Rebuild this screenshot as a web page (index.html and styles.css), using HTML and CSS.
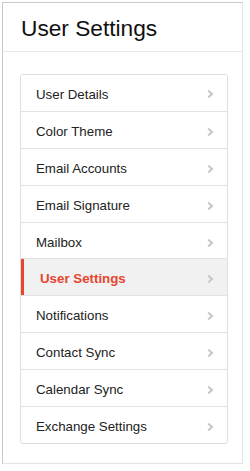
FILE: index.html
```html
<!DOCTYPE html>
<html lang="en">
<head>
  <meta charset="UTF-8" />
  <title>User Settings</title>
  <meta name="viewport" content="width=device-width, initial-scale=1" />
  <link rel="stylesheet" href="styles.css">
</head>
<body>
  <div class="panel">
    <h1 class="panel-title">User Settings</h1>
    <div class="panel-body">
      <ul class="menu">
        <li class="menu-item">User Details</li>
        <li class="menu-item">Color Theme</li>
        <li class="menu-item">Email Accounts</li>
        <li class="menu-item">Email Signature</li>
        <li class="menu-item">Mailbox</li>
        <li class="menu-item active">User Settings</li>
        <li class="menu-item">Notifications</li>
        <li class="menu-item">Contact Sync</li>
        <li class="menu-item">Calendar Sync</li>
        <li class="menu-item">Exchange Settings</li>
      </ul>
    </div>
  </div>
</body>
</html>
```

FILE: styles.css
```css
body {
  margin: 0;
  background: #fff;
  font-family: "Liberation Sans", Arial, sans-serif;
  color: #222;
}
.panel {
  margin: 2px 0 0 2px;
  width: 241px;
  height: 462px;
  border: 1px solid #c8c8c8;
  border-right-color: #e4e4e4;
  border-bottom-color: #e4e4e4;
  box-sizing: border-box;
}
.panel-title {
  margin: 0;
  height: 49px;
  padding: 12px 0 0 18px;
  box-sizing: border-box;
  font-size: 22.7px;
  font-weight: normal;
  color: #111;
  border-bottom: 1px solid #e8e8e8;
}
.panel-body {
  padding: 22px 14px 0 17px;
}
.menu {
  list-style: none;
  margin: 0;
  padding: 0;
  border: 1px solid #dedede;
  border-radius: 3px;
}
.menu-item {
  position: relative;
  height: 36.9px;
  line-height: 34px;
  padding: 3px 0 0 15px;
  box-sizing: border-box;
  font-size: 13.3px;
  border-top: 1px solid #e2e2e2;
}
.menu-item:first-child {
  border-top: none;
  height: 35.9px;
}
.menu-item::after {
  content: "";
  position: absolute;
  right: 15px;
  top: 17px;
  width: 4px;
  height: 4px;
  border-top: 2.5px solid #c8c8c8;
  border-right: 2.5px solid #c8c8c8;
  transform: rotate(45deg);
}
.menu-item:first-child::after {
  top: 16px;
}
.menu-item.active {
  background: #f1f1f1;
  color: #e6452f;
  font-weight: bold;
  padding-left: 19px;
  box-shadow: inset 3px 0 0 #e6452f;
}
```
